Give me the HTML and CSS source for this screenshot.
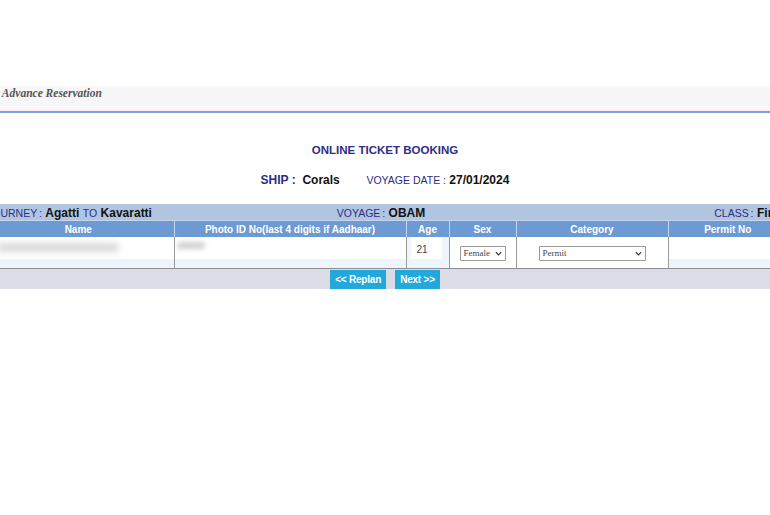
FILE: index.html
```html
<!DOCTYPE html>
<html lang="en">
<head>
<meta charset="UTF-8">
<meta name="viewport" content="width=device-width, initial-scale=1.0">
<title>Online Ticket Booking</title>
<link rel="stylesheet" href="styles.css">
</head>
<body>
    <!-- Banner strip -->
    <div class="banner">
        <span class="banner-text">Online Ticket Advance Reservation</span>
    </div>

    <div class="heading">ONLINE TICKET BOOKING</div>

    <div class="shipline">
        <span class="lbl-bold">SHIP :</span>&nbsp; <span class="val">Corals</span>
        <span class="spacer"></span>
        <span class="lbl">VOYAGE DATE :</span> <span class="val">27/01/2024</span>
    </div>

    <div class="booking">
        <!-- Journey details bar -->
        <div class="journey">
            <div><span class="lbl">JOURNEY :</span> <span class="val">Agatti</span> <span class="lbl">TO</span> <span class="val">Kavaratti</span></div>
            <div class="mid"><span class="lbl">VOYAGE :</span> <span class="val">OBAM</span></div>
            <div class="right"><span class="lbl">CLASS :</span> <span class="val">First</span></div>
        </div>

        <table class="pax">
            <colgroup>
                <col style="width:191px">
                <col style="width:232px">
                <col style="width:43px">
                <col style="width:67px">
                <col style="width:152px">
                <col style="width:119px">
            </colgroup>
            <thead>
                <tr>
                    <th>Name</th>
                    <th>Photo ID No(last 4 digits if Aadhaar)</th>
                    <th>Age</th>
                    <th>Sex</th>
                    <th>Category</th>
                    <th>Permit No</th>
                </tr>
            </thead>
            <tbody>
                <tr>
                    <td><div class="field"><span class="hidden-name"></span></div></td>
                    <td><div class="field"><span class="hidden-id"></span></div></td>
                    <td><div class="field age">21</div></td>
                    <td class="c">
                        <span class="pick sex">
                            <select><option>Female</option><option>Male</option></select>
                            <svg viewBox="0 0 8 5" width="7" height="5"><path d="M1 1l3 3 3-3" fill="none" stroke="#333" stroke-width="1.4"/></svg>
                        </span>
                    </td>
                    <td class="c">
                        <span class="pick cat">
                            <select><option>Permit</option></select>
                            <svg viewBox="0 0 8 5" width="7" height="5"><path d="M1 1l3 3 3-3" fill="none" stroke="#333" stroke-width="1.4"/></svg>
                        </span>
                    </td>
                    <td><div class="field"></div></td>
                </tr>
            </tbody>
        </table>

        <div class="actions">
            <button class="btn">&lt;&lt; Replan</button>
            <button class="btn">Next &gt;&gt;</button>
        </div>
    </div>
</body>
</html>
```

FILE: styles.css
```css
body {
    margin: 0;
    padding: 0;
    background: #fff;
    font-family: "Liberation Sans", Arial, sans-serif;
    overflow: hidden;
}

.banner {
    margin-top: 86px;
    height: 24px;
    background: #f7f7f9;
    border-bottom: 1px solid #f6e9ee;
    box-shadow: 0 2px 0 #7f9fe4;
}

.banner-text {
    display: block;
    margin-left: -65px;
    padding-top: 1px;
    font-family: "Liberation Serif", serif;
    font-style: italic;
    font-weight: bold;
    font-size: 11.5px;
    color: #555;
}

.heading {
    margin-top: 32px;
    text-align: center;
    font-size: 11.5px;
    font-weight: bold;
    color: #2d2d86;
    line-height: 14px;
}

.shipline {
    margin-top: 16px;
    text-align: center;
    line-height: 14px;
    font-size: 12px;
}

.spacer {
    display: inline-block;
    width: 20px;
}

.lbl-bold {
    color: #2d2d86;
    font-weight: bold;
}

.lbl {
    color: #2d2d86;
    font-size: 10.5px;
}

.val {
    color: #111;
    font-weight: bold;
    font-size: 12px;
}

.booking {
    width: 804px;
    margin: 17px 0 0 -17px;
}

.journey {
    display: grid;
    grid-template-columns: 300px 188px 1fr;
    height: 16px;
    line-height: 16px;
    padding: 0 4px;
    background: #b1c5e0;
    word-spacing: -1px;
}

.journey .mid {
    text-align: center;
}

.journey .right {
    text-align: right;
}

.pax {
    width: 804px;
    border-collapse: collapse;
    table-layout: fixed;
}

.pax th {
    height: 16px;
    padding: 0;
    background: #6d9ad2;
    color: #fff;
    font-size: 10px;
    font-weight: bold;
    border-left: 1px solid #c6d6ee;
    border-top: 1px solid #c6d6ee;
}

.pax th:first-child {
    border-left: none;
}

.pax td {
    height: 31px;
    padding: 0;
    background: #eef4fc;
    border-left: 1px solid #9a9a9a;
    vertical-align: top;
}

.pax td:first-child {
    border-left: none;
}

.pax td.c {
    background: #fff;
    text-align: center;
    vertical-align: middle;
}

.field {
    height: 22px;
    background: #fff;
    position: relative;
}

.field.age {
    margin: 0 7px 0 4px;
    padding: 7px 0 0 6px;
    height: 15px;
    font-size: 10px;
    color: #444;
}

.hidden-name {
    position: absolute;
    left: 14px;
    top: 6px;
    width: 122px;
    height: 9px;
    background: #dadada;
    border-radius: 6px;
    filter: blur(3px);
}

.hidden-id {
    position: absolute;
    left: 2px;
    top: 5px;
    width: 28px;
    height: 7px;
    background: #d0d0d0;
    border-radius: 4px;
    filter: blur(2.5px);
}

.pick {
    position: relative;
    display: inline-block;
    vertical-align: middle;
}

.pick select {
    appearance: none;
    -webkit-appearance: none;
    height: 15px;
    padding: 0 0 0 3px;
    border: 1px solid #9a9a9a;
    border-radius: 1px;
    background: #fff;
    font-family: "Liberation Serif", serif;
    font-size: 9px;
    color: #444;
    display: block;
}

.pick svg {
    position: absolute;
    right: 4px;
    top: 5px;
}

.pick.sex select {
    width: 46px;
}

.pick.cat select {
    width: 107px;
}

.actions {
    display: flex;
    justify-content: center;
    gap: 9px;
    height: 21px;
    padding-top: 1px;
    box-sizing: border-box;
    background: #dcdce7;
    border-top: 1px solid #8d8d96;
}

.btn {
    height: 19px;
    padding: 0 5px;
    border: none;
    background: #23a8dc;
    color: #fff;
    font-family: "Liberation Sans", Arial, sans-serif;
    font-size: 10px;
    font-weight: bold;
    letter-spacing: -0.2px;
}
```
